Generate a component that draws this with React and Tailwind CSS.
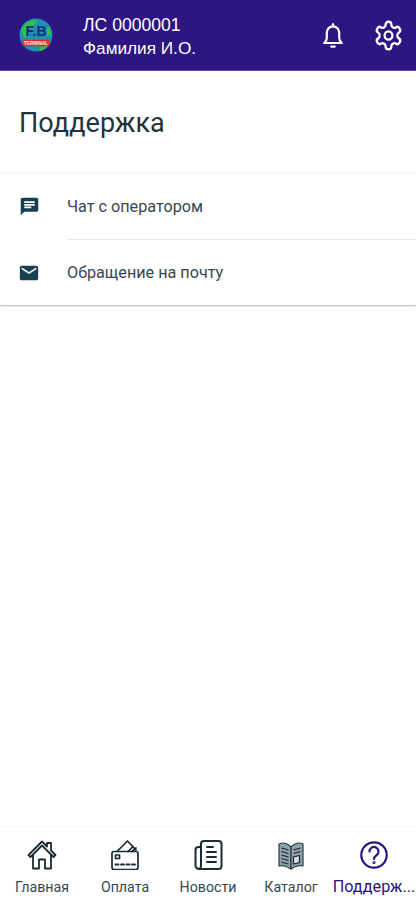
import React from "react";

const Logo = () => (
  <svg width="34" height="34" viewBox="0 0 36 36">
    <circle cx="18" cy="18" r="17.500" fill="#1f8fb5" />
    <path d="M2 12C7 4 14 1 20 3c-3 3-3 5-8 7-4 2-3 9-5 11-2 0-4-5-5-9z" fill="#2fc14a" />
    <path d="M24 30c4-3 7-4 10-6-2 6-7 10-12 11-1-2 0-4 2-5z" fill="#2fc14a" />
    <path d="M31 9c2 3 3 6 3 9l-4 1c-1-3-1-7 1-10z" fill="#2fc14a" />
    <text x="18" y="19" textAnchor="middle" fontFamily="'Liberation Sans', sans-serif" fontWeight="700" fontSize="15" fill="#1c2a78">F.B</text>
    <rect x="4" y="23" width="28" height="7" rx="1" fill="#e32b2b" />
    <text x="18" y="28.500" textAnchor="middle" fontFamily="'Liberation Sans', sans-serif" fontWeight="700" fontSize="5" fill="#ffe9e9">TERMINAL</text>
  </svg>
);

const Bell = () => (
  <svg width="20" height="25" viewBox="0 0 20 25" fill="none" stroke="#fff" strokeWidth="2.200" strokeLinejoin="round" strokeLinecap="round">
    <path d="M1.200 20h17.600c-1.700-1.400-2.600-2.800-2.600-5v-5c0-3.700-2.600-6.700-6.200-6.700S3.800 6.300 3.800 10v5c0 2.200-.9 3.600-2.600 5z" />
    <path d="M10 1.200v2" />
    <path d="M8.300 23.600h3.400" />
  </svg>
);

const Gear = () => (
  <svg width="31" height="33" viewBox="0 0 24 24" preserveAspectRatio="none" fill="none" stroke="#fff" strokeWidth="1.750" strokeLinecap="round" strokeLinejoin="round">
    <path d="M12.220 2h-.44a2 2 0 0 0-2 2v.18a2 2 0 0 1-1 1.730l-.43.250a2 2 0 0 1-2 0l-.15-.08a2 2 0 0 0-2.730.730l-.22.380a2 2 0 0 0 .730 2.730l.15.100a2 2 0 0 1 1 1.720v.510a2 2 0 0 1-1 1.740l-.15.090a2 2 0 0 0-.730 2.730l.22.380a2 2 0 0 0 2.730.730l.15-.08a2 2 0 0 1 2 0l.43.250a2 2 0 0 1 1 1.730V20a2 2 0 0 0 2 2h.44a2 2 0 0 0 2-2v-.18a2 2 0 0 1 1-1.730l.43-.250a2 2 0 0 1 2 0l.15.080a2 2 0 0 0 2.730-.730l.22-.390a2 2 0 0 0-.730-2.730l-.15-.080a2 2 0 0 1-1-1.740v-.500a2 2 0 0 1 1-1.740l.15-.090a2 2 0 0 0 .730-2.730l-.22-.380a2 2 0 0 0-2.730-.730l-.15.080a2 2 0 0 1-2 0l-.43-.250a2 2 0 0 1-1-1.730V4a2 2 0 0 0-2-2z" />
    <circle cx="12" cy="12" r="3" />
  </svg>
);

const Chat = () => (
  <svg width="21" height="21" viewBox="0 0 24 24" fill="#17414f">
    <path d="M20 2H4c-1.100 0-2 .9-2 2v18l4-4h14c1.100 0 2-.9 2-2V4c0-1.100-.9-2-2-2zM6 9h12v2H6V9zm8 5H6v-2h8v2zm4-6H6V6h12v2z" />
  </svg>
);

const Mail = () => (
  <svg width="22" height="22" viewBox="0 0 24 24" fill="#17414f" className="-ml-px">
    <path d="M20 4H4c-1.100 0-2 .9-2 2v12c0 1.100.9 2 2 2h16c1.100 0 2-.9 2-2V6c0-1.100-.9-2-2-2zm0 4l-8 5-8-5V6l8 5 8-5v2z" />
  </svg>
);

const iconProps = { fill: "none", stroke: "#1b2a33", strokeLinejoin: "round", strokeLinecap: "round" };

const Home = () => (
  <svg width="30" height="30" viewBox="0 0 30 30" {...iconProps} strokeWidth="1.800">
    <path d="M1.500 15 15 1.500l5 5V3h4v7.500l4.500 4.500-2 2L15 5.500 3.500 17z" />
    <path d="M6 15v13.500h6V19.500h6v9h6V15" />
  </svg>
);

const Card = () => (
  <svg width="30" height="30" viewBox="0 0 30 30" {...iconProps} strokeWidth="1.700">
    <path d="M7 11.500 17.500 1 26 10" />
    <path d="M18 11.500l5-5M22 11.500l4-3.500" />
    <rect x="2" y="11.500" width="26" height="18" rx="2" />
    <rect x="5.500" y="15" width="4" height="3.500" />
    <path d="M5.500 24.500h3M11 24.500h3M16.500 24.500h3M22 24.500h3" strokeWidth="2" />
  </svg>
);

const News = () => (
  <svg width="30" height="30" viewBox="0 0 30 30" {...iconProps} strokeWidth="2">
    <path d="M8 7H5.500A3 3 0 0 0 2.500 10v15.500a3.500 3.500 0 0 0 3.500 3.500h19.500a3 3 0 0 0 3-3V4a3 3 0 0 0-3-3H11a3 3 0 0 0-3 3v21.500a3.500 3.500 0 0 1-2 3.500" />
    <path d="M14 7h6M14 12h9M14 17h9M14 22h9" />
  </svg>
);

const Catalog = () => (
  <svg width="28" height="30" viewBox="0 0 28 30">
    <path d="M2 4c4-2 8-1 12 3v22c-4-3-8-4-12-3z" fill="#8fa3aa" stroke="#2a3d46" strokeWidth="1.200" strokeLinejoin="round" />
    <path d="M26 4c-4-2-8-1-12 3v22c4-3 8-4 12-3z" fill="#8fa3aa" stroke="#2a3d46" strokeWidth="1.200" strokeLinejoin="round" />
    <path d="M4.500 8l7 2M4.500 11.500l7 2M4.500 15l7 2M4.500 18.500l7 2M4.500 22l7 2M16.500 10l7-2M16.500 13.500l7-2" stroke="#15262e" strokeWidth="1.200" fill="none" />
    <path d="M16.500 17l6-1.500v7l-6 1.500z" fill="#d7dfe2" stroke="#15262e" strokeWidth="1.200" />
  </svg>
);

const Help = () => (
  <svg width="28" height="28" viewBox="0 0 28 28" fill="none" stroke="#2a1382" strokeWidth="2.200" strokeLinecap="round">
    <circle cx="14" cy="14" r="12.700" />
    <path d="M9.500 10.500a4.500 4.500 0 1 1 7.300 3.500c-1.600 1.200-2.800 2-2.800 4" />
    <circle cx="14" cy="21.500" r="0.500" fill="#2a1382" />
  </svg>
);

const Row = ({ icon, label }) => (
  <div className="flex h-[65px] items-center pl-[19px]">
    <div className="flex w-[48px] shrink-0">{icon}</div>
    <span className="pt-[2px] text-[16.200px] text-[#37474f]">{label}</span>
  </div>
);

const Tab = ({ icon, label, active, w }) => (
  <div className={`flex flex-col items-center ${w}`}>
    <div className="flex h-[30px] items-center justify-center">{icon}</div>
    <span className={`mt-[8px] whitespace-nowrap leading-[18px] ${active ? "text-[16.200px] text-[#2a1382]" : "text-[14.200px] text-[#37474f]"}`}>
      {label}
    </span>
  </div>
);

export default function App() {
  return (
    <div className="flex h-[900px] w-[416px] flex-col overflow-hidden bg-white font-['Roboto',sans-serif]">
      <header className="flex h-[71px] shrink-0 items-center border-b border-[#5a4a9c] bg-[#2d1582] pl-[19px] pr-[12px]">
        <Logo />
        <div className="ml-[30px] mt-[3px] flex-1 font-['Liberation_Sans',sans-serif] text-[17.200px] leading-[23px] text-white">
          <div className="text-[17.600px]">ЛС 0000001</div>
          <div>Фамилия И.О.</div>
        </div>
        <div className="mr-[30px] flex"><Bell /></div>
        <Gear />
      </header>

      <div className="flex h-[102px] shrink-0 items-center pl-[19px] pt-[2px] text-[27px] text-[#1f333d]">Поддержка</div>

      <div className="shrink-0 border-t border-[#f2f2f2] shadow-[0_1px_2px_rgba(0,0,0,0.3)]">
        <Row icon={<Chat />} label="Чат с оператором" />
        <div className="ml-[67px] h-px bg-[#e6e6e6]" />
        <Row icon={<Mail />} label="Обращение на почту" />
      </div>

      <div className="flex-1" />

      <nav className="flex h-[74px] shrink-0 items-start border-t border-[#f7f7f7] pt-[13px]">
        <Tab icon={<Home />} label="Главная" w="w-[84px]" />
        <Tab icon={<Card />} label="Оплата" w="w-[82px]" />
        <Tab icon={<News />} label="Новости" w="w-[84px]" />
        <Tab icon={<Catalog />} label="Каталог" w="w-[82px]" />
        <Tab icon={<Help />} label="Поддерж..." active w="w-[84px]" />
      </nav>
    </div>
  );
}
